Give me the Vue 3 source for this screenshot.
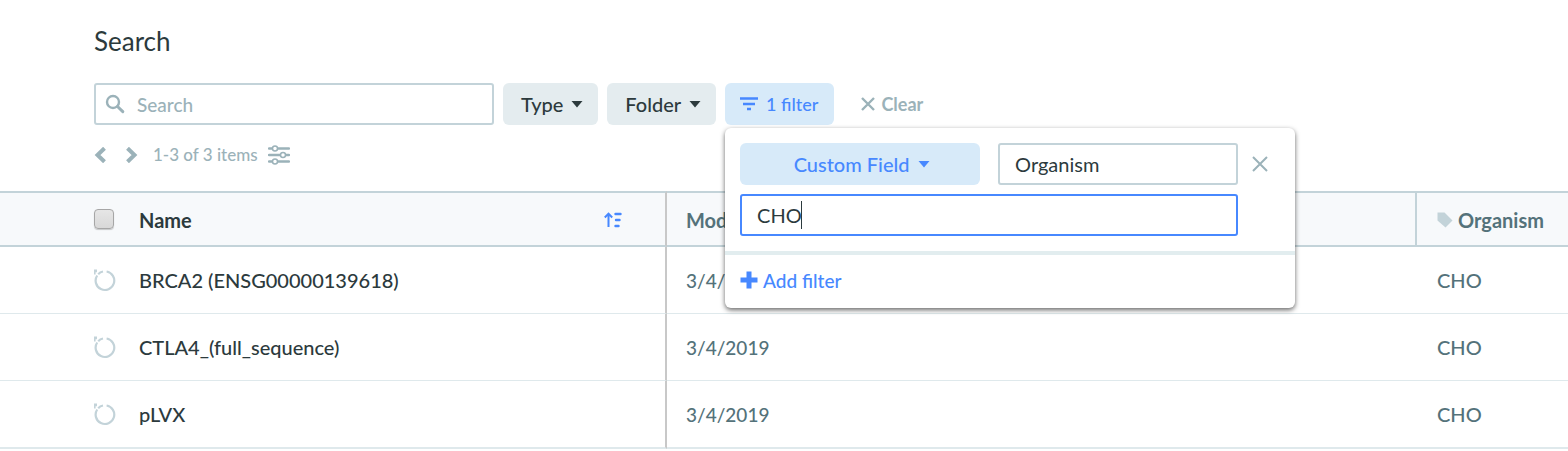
<script setup>
import { ref } from 'vue'

const query = ref('')
const fieldName = ref('Organism')
const fieldValue = ref('CHO')
const rows = [
  { name: 'BRCA2 (ENSG00000139618)', modified: '3/4/2019', organism: 'CHO' },
  { name: 'CTLA4_(full_sequence)', modified: '3/4/2019', organism: 'CHO' },
  { name: 'pLVX', modified: '3/4/2019', organism: 'CHO' },
]
</script>

<template>
  <main class="page">
    <header class="head">
      <h1 class="title">Search</h1>

      <div class="toolbar">
        <div class="search">
          <svg class="search-icon" width="20" height="20" viewBox="0 0 20 20" aria-hidden="true">
            <circle cx="8" cy="8" r="6" fill="none" stroke="currentColor" stroke-width="2.4" />
            <path d="M12.5 12.5 L17.8 17.6" stroke="currentColor" stroke-width="3" stroke-linecap="round" />
          </svg>
          <input v-model="query" class="box search-box" type="text" placeholder="Search" aria-label="Search" />
        </div>

        <button class="btn" type="button">
          Type
          <svg width="12" height="7" viewBox="0 0 12 7" aria-hidden="true"><path d="M0.5 0 H11.5 L6 6.5 Z" fill="currentColor" /></svg>
        </button>
        <button class="btn" type="button">
          Folder
          <svg width="12" height="7" viewBox="0 0 12 7" aria-hidden="true"><path d="M0.5 0 H11.5 L6 6.5 Z" fill="currentColor" /></svg>
        </button>

        <div class="filter">
          <button class="btn blue filter-btn" type="button" aria-expanded="true">
            <svg width="18" height="14" viewBox="0 0 18 14" aria-hidden="true">
              <path d="M0 1.5 H18 M3 7 H15 M7 12 H11" stroke="currentColor" stroke-width="2.4" />
            </svg>
            1 filter
          </button>

          <section class="popup" aria-label="Filters">
            <div class="fields">
              <button class="btn blue" type="button">
                Custom Field
                <svg width="12" height="7" viewBox="0 0 12 7" aria-hidden="true"><path d="M0.5 0 H11.5 L6 6.5 Z" fill="currentColor" /></svg>
              </button>
              <input v-model="fieldName" class="box" type="text" aria-label="Field name" />
              <button class="plain remove" type="button" aria-label="Remove filter">
                <svg width="16" height="16" viewBox="0 0 16 16" aria-hidden="true">
                  <path d="M1 1 L15 15 M15 1 L1 15" stroke="currentColor" stroke-width="2" />
                </svg>
              </button>
              <div class="value">
                <input v-model="fieldValue" class="box active" type="text" aria-label="Field value" />
                <span class="caret" aria-hidden="true"></span>
              </div>
            </div>
            <div class="popup-foot">
              <button class="plain add" type="button">
                <svg width="18" height="18" viewBox="0 0 18 18" aria-hidden="true">
                  <path d="M9 0.5 V17.5 M0.5 9 H17.5" stroke="currentColor" stroke-width="5" />
                </svg>
                Add filter
              </button>
            </div>
          </section>
        </div>

        <button class="plain clear" type="button">
          <svg width="14" height="14" viewBox="0 0 14 14" aria-hidden="true">
            <path d="M1 1 L13 13 M13 1 L1 13" stroke="currentColor" stroke-width="2.4" />
          </svg>
          Clear
        </button>
      </div>

      <nav class="pager" aria-label="Pages">
        <button class="plain" type="button" aria-label="Previous page">
          <svg width="12" height="16" viewBox="0 0 12 16" aria-hidden="true"><path d="M10.5 1.2 L3.5 8 L10.5 14.8" fill="none" stroke="currentColor" stroke-width="4" /></svg>
        </button>
        <button class="plain" type="button" aria-label="Next page">
          <svg width="12" height="16" viewBox="0 0 12 16" aria-hidden="true"><path d="M1.5 1.2 L8.5 8 L1.5 14.8" fill="none" stroke="currentColor" stroke-width="4" /></svg>
        </button>
        <span class="count">1-3 of 3 items</span>
        <button class="plain" type="button" aria-label="Columns">
          <svg width="22" height="20" viewBox="0 0 22 20" aria-hidden="true">
            <path d="M1 3.5 H21 M1 10 H21 M1 16.5 H21" stroke="currentColor" stroke-width="2.4" stroke-linecap="round" />
            <g fill="#fff" stroke="currentColor" stroke-width="1.5">
              <circle cx="7" cy="3.5" r="2.5" /><circle cx="15" cy="10" r="2.5" /><circle cx="7" cy="16.5" r="2.5" />
            </g>
          </svg>
        </button>
      </nav>
    </header>

    <table class="grid">
      <colgroup>
        <col class="c-check" /><col class="c-name" /><col /><col class="c-org" />
      </colgroup>
      <thead>
        <tr>
          <th class="check"><input class="tick" type="checkbox" aria-label="Select all" /></th>
          <th class="name">
            <span class="name-head">
              Name
              <svg width="18" height="16" viewBox="0 0 18 16" aria-hidden="true">
                <path d="M4.5 15 V2 M0.8 5.5 L4.5 1.6 L8.2 5.5" fill="none" stroke="currentColor" stroke-width="2" />
                <path d="M11.5 2 H16.5 M12 8 H15.5 M11.5 14 H14.5" stroke="currentColor" stroke-width="2.4" stroke-linecap="round" />
              </svg>
            </span>
          </th>
          <th>Modified</th>
          <th class="org">
            <span class="org-head">
              <svg width="16" height="16" viewBox="0 0 16 16" aria-hidden="true"><path d="M0.5 0.5 H7.5 L15.5 8.5 L8.5 15.5 L0.5 8.5 Z" fill="currentColor" /></svg>
              Organism
            </span>
          </th>
        </tr>
      </thead>
      <tbody>
        <tr v-for="row in rows" :key="row.name">
          <td class="check">
            <svg class="plasmid" width="22" height="23" viewBox="0 0 22 23" aria-hidden="true">
              <path d="M12.6 2.5 A9.3 9.3 0 1 1 3.2 6.5 M4.2 5.2 A9.3 9.3 0 0 1 9 2.5" fill="none" stroke="currentColor" stroke-width="2.2" />
              <path d="M0 0.5 H3 V3.2 H1.6 V5.5 H0 Z" fill="currentColor" />
            </svg>
          </td>
          <td class="name">{{ row.name }}</td>
          <td class="date">{{ row.modified }}</td>
          <td>{{ row.organism }}</td>
        </tr>
      </tbody>
    </table>
  </main>
</template>

<style>
body { background: #fff; }
</style>

<style scoped>
.page {
  font-family: Lato, "Open Sans", sans-serif;
  font-size: 20px;
  font-weight: 500;
  color: #2c3a3d;
}
.page * { box-sizing: border-box; }
.head { padding: 25px 24px 24px 94px; }
.title { margin: 0; font-size: 26px; line-height: 32px; font-weight: 400; }
.toolbar { display: flex; gap: 9px; margin-top: 26px; }
.search { position: relative; width: 400px; }
.search-icon { position: absolute; left: 11px; top: 11px; color: #9bb2b9; }
.box {
  display: block;
  width: 100%;
  height: 42px;
  padding: 0 15px;
  border: 2px solid #c3d3d9;
  border-radius: 3px;
  background: #fff;
  color: inherit;
  font: inherit;
  font-weight: 400;
  outline: 0;
}
.search-box { padding-left: 41px; font-size: 19px; font-weight: 500; }
.search-box::placeholder { color: #9bb2b9; opacity: 1; }
.btn {
  display: flex;
  align-items: center;
  justify-content: center;
  gap: 8px;
  height: 42px;
  padding: 0 15px 0 18px;
  border: 0;
  border-radius: 6px;
  background: #e4ecef;
  color: inherit;
  font: inherit;
  white-space: nowrap;
}
.blue { background: #d7eaf9; color: #4788ff; }
.filter { position: relative; }
.filter-btn { padding: 0 16px 0 15px; font-size: 18px; }
.plain {
  display: flex;
  align-items: center;
  padding: 0;
  border: 0;
  background: none;
  color: #9bb2b9;
  font: inherit;
}
.clear { gap: 6px; margin-left: 18px; font-size: 18px; font-weight: 700; }
.popup {
  position: absolute;
  z-index: 2;
  top: 45px;
  left: 0;
  width: 570px;
  border-radius: 6px;
  background: #fff;
  box-shadow: 0 2px 5px rgba(0, 0, 0, 0.6);
}
.fields {
  display: grid;
  grid-template-columns: 240px 240px 1fr;
  gap: 9px 18px;
  padding: 15px 0 15px 15px;
}
.remove { margin-left: -4px; }
.value { position: relative; grid-column: 1 / 3; }
.active { border-color: #4788ff; caret-color: transparent; }
.caret {
  position: absolute;
  top: 7px;
  left: 61px;
  width: 1px;
  height: 28px;
  background: #2c3a3d;
}
.popup-foot { padding: 10px 15px 13px; border-top: 4px solid #e2edef; }
.add { gap: 5px; height: 30px; font-size: 19px; color: #4788ff; }
.pager { display: flex; align-items: center; gap: 20px; margin-top: 17px; height: 25px; }
.count { margin-right: -10px; margin-left: -5px; font-size: 17px; line-height: 25px; color: #9bb2b9; }
.grid { width: 100%; table-layout: fixed; border-collapse: separate; border-spacing: 0; }
.c-check { width: 139px; }
.c-name { width: 528px; }
.c-org { width: 153px; }
th {
  height: 56px;
  padding: 2px 0 0 19px;
  border: solid #c3d3d9;
  border-width: 2px 0;
  background: #f7f9fb;
  color: #54727a;
  font-weight: 700;
  text-align: left;
}
td {
  height: 67px;
  padding: 0 0 0 19px;
  border-bottom: 1px solid #dfe9ec;
  color: #54727a;
}
tr:last-child td { height: 68px; border-bottom-width: 2px; }
.date { font-size: 19px; }
td:last-child { padding-left: 22px; }
th.check, td.check { padding-top: 0; padding-left: 94px; }
th.name, td.name { padding-left: 0; border-right: 2px solid #c8c8c8; color: #2c3a3d; }
th.org { padding-left: 20px; border-left: 2px solid #c3d3d9; }
.name-head { display: flex; align-items: center; justify-content: space-between; padding-right: 43px; }
.name-head svg { color: #4788ff; }
.org-head { display: flex; align-items: center; gap: 5px; }
.org-head svg { color: #c3d3d9; }
.tick {
  display: block;
  appearance: none;
  width: 20px;
  height: 20px;
  margin: 0;
  border: 1px solid #a6a6a6;
  border-radius: 4px;
  background: linear-gradient(#e6e6e6, #d8d8d8);
  box-shadow: 0 1px 1px rgba(0, 0, 0, 0.2);
}
.plasmid { display: block; color: #c3d3d9; }
</style>
